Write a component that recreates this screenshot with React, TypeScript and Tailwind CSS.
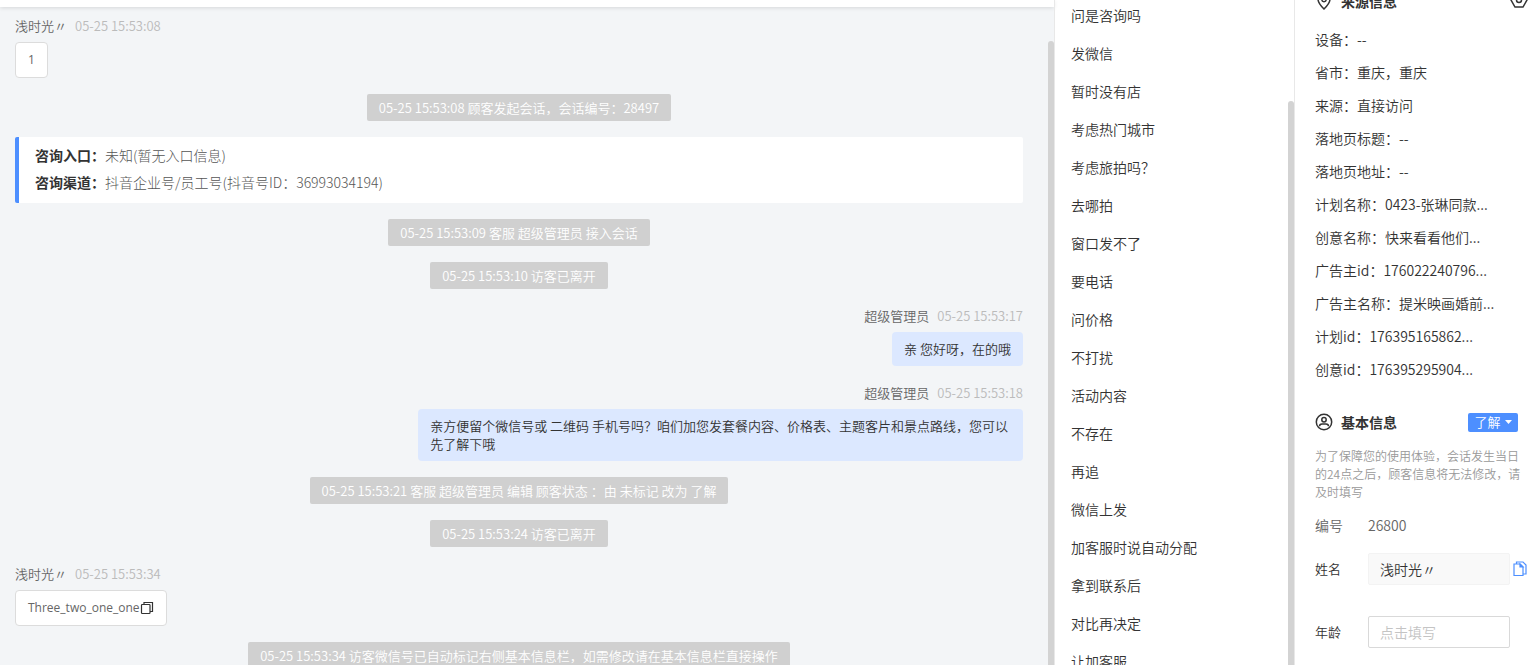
import { useState } from 'react';

type Message =
  | { kind: 'notice'; text: string }
  | { kind: 'visitor'; time: string; text: string; copyable?: boolean }
  | { kind: 'agent'; time: string; text: string }
  | { kind: 'entry' };

const messages: Message[] = [
  { kind: 'visitor', time: '05-25 15:53:08', text: '1' },
  { kind: 'notice', text: '05-25 15:53:08 顾客发起会话，会话编号：28497' },
  { kind: 'entry' },
  { kind: 'notice', text: '05-25 15:53:09 客服 超级管理员 接入会话' },
  { kind: 'notice', text: '05-25 15:53:10 访客已离开' },
  { kind: 'agent', time: '05-25 15:53:17', text: '亲 您好呀，在的哦' },
  {
    kind: 'agent',
    time: '05-25 15:53:18',
    text: '亲方便留个微信号或 二维码 手机号吗？咱们加您发套餐内容、价格表、主题客片和景点路线，您可以先了解下哦',
  },
  { kind: 'notice', text: '05-25 15:53:21 客服 超级管理员 编辑 顾客状态 ：由 未标记 改为 了解' },
  { kind: 'notice', text: '05-25 15:53:24 访客已离开' },
  { kind: 'visitor', time: '05-25 15:53:34', text: 'Three_two_one_one', copyable: true },
  { kind: 'notice', text: '05-25 15:53:34 访客微信号已自动标记右侧基本信息栏，如需修改请在基本信息栏直接操作' },
];

const quickReplies = [
  '问是咨询吗',
  '发微信',
  '暂时没有店',
  '考虑热门城市',
  '考虑旅拍吗？',
  '去哪拍',
  '窗口发不了',
  '要电话',
  '问价格',
  '不打扰',
  '活动内容',
  '不存在',
  '再追',
  '微信上发',
  '加客服时说自动分配',
  '拿到联系后',
  '对比再决定',
  '让加客服',
];

const sourceInfo = [
  ['设备', '--'],
  ['省市', '重庆，重庆'],
  ['来源', '直接访问'],
  ['落地页标题', '--'],
  ['落地页地址', '--'],
  ['计划名称', '0423-张琳同款...'],
  ['创意名称', '快来看看他们...'],
  ['广告主id', '176022240796...'],
  ['广告主名称', '提米映画婚前...'],
  ['计划id', '176395165862...'],
  ['创意id', '176395295904...'],
];

function PinIcon() {
  return (
    <svg width="18" height="18" viewBox="0 0 18 18" fill="none" stroke="#333" strokeWidth="1.5">
      <path d="M9 17C5.500 13.600 3 10.600 3 7.200a6 6 0 0 1 12 0C15 10.600 12.500 13.600 9 17Z" />
      <circle cx="9" cy="7.500" r="2.200" />
    </svg>
  );
}

function SettingIcon() {
  return (
    <svg width="18" height="18" viewBox="0 0 18 18" fill="none" stroke="#333" strokeWidth="1.5">
      <path d="M5 1h8l4 7-4 7H5L1 8Z" />
      <circle cx="9" cy="8" r="2.500" />
    </svg>
  );
}

function UserIcon() {
  return (
    <svg width="18" height="18" viewBox="0 0 18 18" fill="none" stroke="#333" strokeWidth="1.5">
      <circle cx="9" cy="9" r="7.700" />
      <circle cx="9" cy="6.800" r="2.200" />
      <path d="M4.500 13.300c0-1.600 1-2.300 2.500-2.300h4c1.500 0 2.500.7 2.500 2.300" />
    </svg>
  );
}

function CopyIcon() {
  return (
    <svg width="14" height="14" viewBox="0 0 14 14" fill="none" stroke="#333" strokeWidth="1.2">
      <rect x="1.500" y="3.500" width="8.500" height="9" rx="0.8" />
      <path d="M4 3.500V1.500h8.500v9H10" />
    </svg>
  );
}

function CopyFileIcon() {
  return (
    <svg width="14" height="16" viewBox="0 0 14 16" fill="none" stroke="#4d8fff" strokeWidth="1.2">
      <path d="M1 3h6l3 3v8.500H1Z" />
      <path d="M7 3v3h3Z" fill="#4d8fff" />
      <path d="M3.500 3V1h6.500l3 3v9h-3" />
    </svg>
  );
}

function MessageItem({ message }: { message: Message }) {
  if (message.kind === 'notice') {
    return (
      <p className="self-center h-[27px] leading-[28px] px-3 rounded-xs bg-[#d0d0d0] text-white whitespace-nowrap">
        {message.text}
      </p>
    );
  }

  if (message.kind === 'entry') {
    return (
      <div className="border-l-4 border-[#4d8fff] rounded-xs bg-white px-4 pt-[5px] pb-[7px] text-sm leading-[27px] text-[#555]">
        <p className="font-light"><b className="font-bold text-[#333]">咨询入口：</b>未知(暂无入口信息)</p>
        <p className="font-light"><b className="font-bold text-[#333]">咨询渠道：</b>抖音企业号/员工号(抖音号ID：36993034194)</p>
      </div>
    );
  }

  if (message.kind === 'agent') {
    return (
      <div className="flex flex-col items-end">
        <div className="flex gap-2 h-[27px] leading-[22px]">
          <span className="text-[#666]">超级管理员</span>
          <time className="text-[#bbb]">{message.time}</time>
        </div>
        <p className="max-w-[60%] px-3 py-2 rounded-sm bg-[#dce8ff] text-[#333] leading-[18px]">{message.text}</p>
      </div>
    );
  }

  return (
    <div className="flex flex-col items-start">
      <div className="flex gap-2 h-[27px] leading-[22px]">
        <span className="text-[#666]">浅时光〃</span>
        <time className="text-[#bbb]">{message.time}</time>
      </div>
      <div className="flex items-center h-9 px-3 rounded-sm border border-[#dcdcdc] bg-white text-[#666] font-['Open_Sans','Noto_Sans_CJK_SC',sans-serif] font-normal text-xs">
        {message.text}
        {message.copyable && (
          <button type="button" aria-label="复制"><CopyIcon /></button>
        )}
      </div>
    </div>
  );
}

export default function App() {
  const [age, setAge] = useState('');

  return (
    <div
      lang="zh-CN"
      className="flex h-screen overflow-hidden bg-white font-['Noto_Sans_CJK_SC',sans-serif] font-[350] text-sm text-[#333]"
    >
      <main className="flex flex-col flex-1 min-w-0 bg-[#f3f5f7]">
        <header className="h-[7px] shrink-0 bg-white shadow-[0_1px_4px_rgba(0,0,0,0.12)]" />
        <div className="flex flex-1 min-h-0">
          <div className="flex flex-col flex-1 min-w-0 gap-4 pt-2 pl-[15px] pr-[25px] text-[13px] overflow-hidden *:shrink-0">
            {messages.map((message, i) => (
              <MessageItem key={i} message={message} />
            ))}
          </div>
          <div className="w-1.5 mt-[34px] rounded-t-full bg-[#d3d3d3]" />
        </div>
      </main>

      <aside className="flex w-[241px] shrink-0 border-x border-[#e8e8e8]">
        <ul className="flex-1 -mt-1 pl-4">
          {quickReplies.map((reply) => (
            <li key={reply} className="h-[38px] leading-[38px]">{reply}</li>
          ))}
        </ul>
        <div className="w-1.5 mt-[101px] rounded-t-full bg-[#d3d3d3]" />
      </aside>

      <aside className="w-[244px] shrink-0 pl-5">
        <section className="-mt-[22px]">
          <div className="flex items-center h-[45px] pr-[11px]">
            <PinIcon />
            <h2 className="flex-1 pl-2 font-bold">来源信息</h2>
            <button type="button" aria-label="设置"><SettingIcon /></button>
          </div>
          <dl>
            {sourceInfo.map(([label, value]) => (
              <div key={label} className="flex h-[33px] leading-[33px] whitespace-nowrap">
                <dt>{label}：</dt>
                <dd>{value}</dd>
              </div>
            ))}
          </dl>
        </section>

        <section className="pt-4">
          <div className="flex items-center h-10 pr-[21px]">
            <UserIcon />
            <h2 className="flex-1 pl-2 font-bold">基本信息</h2>
            <button type="button" className="flex items-center justify-center gap-1 w-[50px] h-[19px] rounded-xs bg-[#4d8fff] text-white text-[13px]">
              了解
              <svg width="7" height="4" viewBox="0 0 7 4" fill="currentColor"><path d="M0 0h7L3.500 4Z" /></svg>
            </button>
          </div>
          <p className="pt-[5px] pr-[18px] text-xs leading-[18px] text-[#999]">
            为了保障您的使用体验，会话发生当日的24点之后，顾客信息将无法修改，请及时填写
          </p>
          <div className="flex items-center h-12 text-[#666]">
            <span className="w-[53px]">编号</span>
            <span>26800</span>
          </div>
          <div className="flex items-center h-10">
            <label htmlFor="name" className="w-[53px] text-[13px]">姓名</label>
            <input id="name" readOnly value="浅时光〃" className="w-[142px] h-8 px-[11px] border border-[#f3f3f3] rounded-xs bg-[#f9f9f9] outline-none" />
            <button type="button" aria-label="复制姓名" className="pl-[3px]"><CopyFileIcon /></button>
          </div>
          <div className="flex items-center h-[86px]">
            <label htmlFor="age" className="w-[53px] text-[13px]">年龄</label>
            <input
              id="age"
              value={age}
              placeholder="点击填写"
              onChange={(e) => setAge(e.target.value)}
              className="w-[142px] h-8 px-[11px] border border-[#d9d9d9] rounded-xs outline-none placeholder:text-[#c4c4c4]"
            />
          </div>
        </section>
      </aside>
    </div>
  );
}
